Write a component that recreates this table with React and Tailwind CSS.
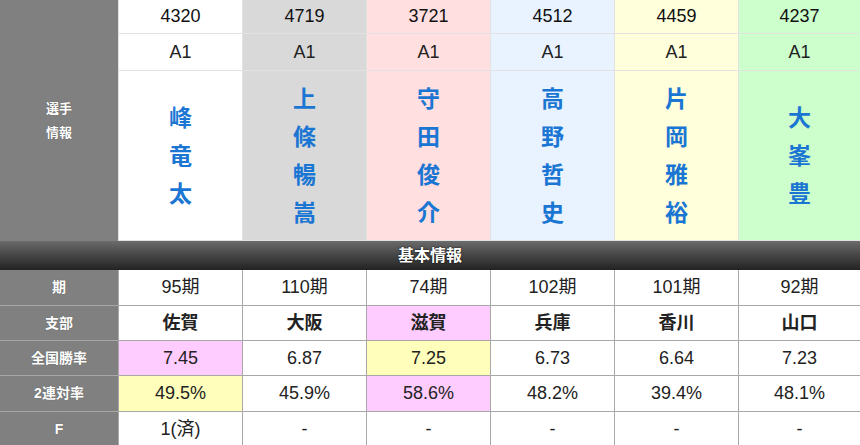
import React from "react";

const players = [
  { no: "4320", cls: "A1", name: "峰竜太", bg: "bg-white", ki: "95期", branch: "佐賀", rate: "7.45", rate2: "49.5%", f: "1(済)", branchBg: "bg-white", rateBg: "bg-[#ffccff]", rate2Bg: "bg-[#ffffbb]" },
  { no: "4719", cls: "A1", name: "上條暢嵩", bg: "bg-[#d9d9d9]", ki: "110期", branch: "大阪", rate: "6.87", rate2: "45.9%", f: "-", branchBg: "bg-white", rateBg: "bg-white", rate2Bg: "bg-white" },
  { no: "3721", cls: "A1", name: "守田俊介", bg: "bg-[#ffdfdf]", ki: "74期", branch: "滋賀", rate: "7.25", rate2: "58.6%", f: "-", branchBg: "bg-[#ffccff]", rateBg: "bg-[#ffffbb]", rate2Bg: "bg-[#ffccff]" },
  { no: "4512", cls: "A1", name: "高野哲史", bg: "bg-[#e8f3ff]", ki: "102期", branch: "兵庫", rate: "6.73", rate2: "48.2%", f: "-", branchBg: "bg-white", rateBg: "bg-white", rate2Bg: "bg-white" },
  { no: "4459", cls: "A1", name: "片岡雅裕", bg: "bg-[#ffffdc]", ki: "101期", branch: "香川", rate: "6.64", rate2: "39.4%", f: "-", branchBg: "bg-white", rateBg: "bg-white", rate2Bg: "bg-white" },
  { no: "4237", cls: "A1", name: "大峯豊", bg: "bg-[#ccffcc]", ki: "92期", branch: "山口", rate: "7.23", rate2: "48.1%", f: "-", branchBg: "bg-white", rateBg: "bg-white", rate2Bg: "bg-white" },
];

const cols = "grid grid-cols-[118px_124px_124px_124px_124px_124px_122px]";

function Label({ children }) {
  return (
    <div className="flex items-center justify-center bg-[#808080] border-b border-[#a8a8a8] text-[14px] font-bold text-white [text-shadow:0_0_1px_#555]">
      {children}
    </div>
  );
}

function Cell({ bg = "bg-white", bold, children }) {
  return (
    <div
      className={`flex items-center justify-center border-b border-l border-[#a8a8a8] text-[#222] ${bg} ${
        bold ? "text-[18px] font-bold" : "text-[18px]"
      }`}
    >
      {children}
    </div>
  );
}

export default function App() {
  return (
    <div className="w-[860px] h-[445px] overflow-hidden bg-white font-['Liberation_Sans','Noto_Sans_CJK_JP',sans-serif]">
      {/* 選手情報 */}
      <div className={`${cols} grid-rows-[34px_37px_170px]`}>
        <div className="row-span-3 flex items-center justify-center bg-[#808080] text-[13px] font-bold leading-[24px] text-white text-center [text-shadow:0_0_1px_#555]">
          選手
          <br />
          情報
        </div>
        {players.map((p) => (
          <div key={p.no} className={`flex items-center justify-center border-l border-b border-[#e2e2e2] text-[18px] text-[#111] ${p.bg}`}>
            {p.no}
          </div>
        ))}
        {players.map((p) => (
          <div key={p.no + "c"} className={`flex items-center justify-center border-l border-b border-[#e2e2e2] text-[18px] text-[#222] ${p.bg}`}>
            {p.cls}
          </div>
        ))}
        {players.map((p) => (
          <div key={p.no + "n"} className={`flex flex-col items-center justify-center border-l border-b border-[#e2e2e2] ${p.bg}`}>
            {p.name.split("").map((ch, i) => (
              <span key={i} className="text-[23px] font-bold leading-[38px] text-[#1b76d3]">
                {ch}
              </span>
            ))}
          </div>
        ))}
      </div>

      <div className="flex h-[29px] items-center justify-center bg-gradient-to-b from-[#6b6b6b] to-[#232323] text-[16px] font-bold text-white [text-shadow:0_0_2px_#000]">
        基本情報
      </div>

      <div className={`${cols} grid-rows-[36px_35px_35px_36px_36px]`}>
        <Label>期</Label>
        {players.map((p) => (
          <Cell key={p.no}>{p.ki}</Cell>
        ))}
        <Label>支部</Label>
        {players.map((p) => (
          <Cell key={p.no} bg={p.branchBg} bold>
            {p.branch}
          </Cell>
        ))}
        <Label>全国勝率</Label>
        {players.map((p) => (
          <Cell key={p.no} bg={p.rateBg}>
            {p.rate}
          </Cell>
        ))}
        <Label>2連対率</Label>
        {players.map((p) => (
          <Cell key={p.no} bg={p.rate2Bg}>
            {p.rate2}
          </Cell>
        ))}
        <Label>F</Label>
        {players.map((p) => (
          <Cell key={p.no}>{p.f}</Cell>
        ))}
      </div>
    </div>
  );
}
